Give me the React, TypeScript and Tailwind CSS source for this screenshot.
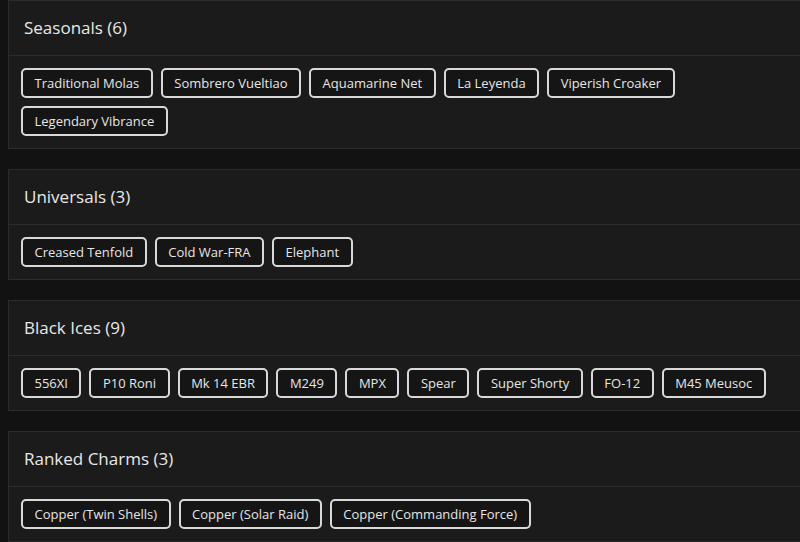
import React from 'react'

const groups: { title: string; items: string[] }[] = [
  {
    title: 'Seasonals (6)',
    items: [
      'Traditional Molas',
      'Sombrero Vueltiao',
      'Aquamarine Net',
      'La Leyenda',
      'Viperish Croaker',
      'Legendary Vibrance',
    ],
  },
  {
    title: 'Universals (3)',
    items: ['Creased Tenfold', 'Cold War-FRA', 'Elephant'],
  },
  {
    title: 'Black Ices (9)',
    items: ['556XI', 'P10 Roni', 'Mk 14 EBR', 'M249', 'MPX', 'Spear', 'Super Shorty', 'FO-12', 'M45 Meusoc'],
  },
  {
    title: 'Ranked Charms (3)',
    items: ['Copper (Twin Shells)', 'Copper (Solar Raid)', 'Copper (Commanding Force)'],
  },
]

function Chip({ label }: { label: string }) {
  return (
    <span className="h-[30px] px-[11.5px] flex items-center rounded-[5px] border-2 border-[#d9d9d9] bg-[#151515] text-[13px] text-[#e6e6e6] leading-none whitespace-nowrap">
      {label}
    </span>
  )
}

export default function App() {
  return (
    <div
      className="w-full h-[542px] overflow-hidden bg-[#121212] flex flex-col gap-[20px] pl-[8px]"
      style={{ fontFamily: '"Open Sans", "Liberation Sans", sans-serif' }}
    >
      {groups.map(g => (
        <div key={g.title} className="w-[820px] shrink-0 bg-[#1b1b1b] border border-[#2b2b2b]">
          {/* Header */}
          <div className="h-[55px] flex items-center px-[15px] border-b border-[#2b2b2b]">
            <h3 className="text-[17px] font-medium text-[#e8e8e8]">{g.title}</h3>
          </div>
          {/* Chips */}
          <div className="w-[780px] flex flex-wrap gap-[8px] px-[12px] pt-[12px] pb-[12px]">
            {g.items.map(it => (
              <Chip key={it} label={it} />
            ))}
          </div>
        </div>
      ))}
    </div>
  )
}
